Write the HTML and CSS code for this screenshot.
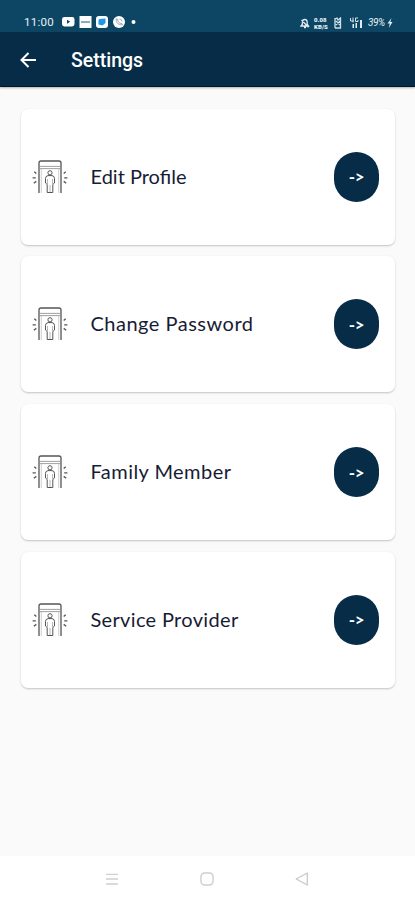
FILE: index.html
```
<!DOCTYPE html>
<html lang="en">
<head>
<meta charset="utf-8">
<meta name="viewport" content="width=device-width, initial-scale=1">
<title>Settings</title>
<link rel="stylesheet" href="styles.css">
</head>
<body>
<svg class="sprite" aria-hidden="true">
  <symbol id="gate" viewBox="0 0 36 36">
    <g fill="none" stroke="#555" stroke-width="1">
      <path d="M7 34V4Q7 2 9 2H27Q29 2 29 4V34" stroke-width="1.3"/>
      <path d="M7.5 7.4H28.5M7.5 9.6H28.5" stroke="#888" stroke-width=".8"/>
      <path d="M9.3 10V34M26.7 10V34" stroke="#bbb" stroke-width=".7"/>
      <circle cx="18" cy="13.8" r="2.1"/>
      <path d="M16 16.6H20Q22.5 17 22.5 19.5V24L20.8 25.5V33.5H15.2V25.5L13.5 24V19.5Q13.5 17 16 16.6Z"/>
      <path d="M18 26V33M15.5 20V25M20.5 20V25" stroke="#999" stroke-width=".7"/>
      <path d="M4.3 14.5L2.3 12.7M3.8 18.8H.6M4.3 22.4L1.8 24.2M31.7 14.5L33.7 12.7M32.2 18.8H35.4M31.7 22.4L34.2 24.2" stroke-width="1.3"/>
    </g>
  </symbol>
</svg>
<div class="status">
  <span class="time">11:00</span>
  <svg class="notes" width="78" height="14" viewBox="0 0 78 14">
    <rect x="0" y="2" width="12.5" height="9.5" rx="2.4" fill="#fff"/>
    <path d="M5 4.8L8.2 6.8L5 8.8Z" fill="#0d4664"/>
    <rect x="17.5" y="1" width="12" height="12" fill="#fff"/>
    <path d="M19 7H28" stroke="#42748b" stroke-width="1.2"/>
    <rect x="34" y="1" width="12" height="12" rx="3" fill="#fff"/>
    <path d="M37.5 4L43.5 3.5V8L40.5 10.5L36.5 9.5V5Z" fill="#1998f0"/>
    <circle cx="57" cy="7" r="6" fill="#fff"/>
    <path d="M54 3.8Q54 10 60.5 10L60 8.6L58 8.3L55.7 6L56 4.4ZM57.5 4Q60 4 60 6.5" fill="none" stroke="#8ba8b7" stroke-width=".9"/>
    <circle cx="71.5" cy="7" r="2" fill="#fff"/>
  </svg>
  <div class="system">
    <svg width="10" height="12" viewBox="0 0 10 12" fill="none" stroke="#e0ebf0" stroke-width="1.3"><path d="M1 9H8.5L7.2 7.2V5Q7 2.5 4.8 2.5T2.4 5V7.2ZM4 10.5H6M1.5 3L8.5 10.3"/></svg>
    <span class="rate"><b>0.08</b><b>KB/S</b></span>
    <svg width="8" height="12" viewBox="0 0 8 12" fill="none" stroke="#d2e0e7" stroke-width="1.3"><path d="M1 1V11M1 2L3 1L4 3L6.5 1V11H1M2 4L6 8M6 4L2 8"/></svg>
    <svg class="signal" width="13" height="12" viewBox="0 0 13 12"><path d="M.5 1V4H4M3 .5V5.5M8 1H5.5V4.5H8V3" fill="none" stroke="#d2e0e7" stroke-width="1"/><path d="M2.5 7H4V11H2.5ZM5.5 6H7V11H5.5ZM10 3H12V11H10Z" fill="#e0ebf0"/></svg>
    <span class="battery">39%</span>
    <svg width="6" height="12" viewBox="0 0 6 12"><path d="M4.5 1L.5 6.5H2.8L1.8 11L5.5 5H3.3Z" fill="#e0ebf0"/></svg>
  </div>
</div>
<header class="appbar">
  <svg width="17" height="18" viewBox="0 0 17 18" fill="none" stroke="#fff" stroke-width="2"><path d="M16 9H2M8.5 2L1.5 9L8.5 16"/></svg>
  <h1>Settings</h1>
</header>
<main class="list">
  <section class="card"><svg class="gate"><use href="#gate"/></svg><span class="label edit">Edit Profile</span><button class="go">-&gt;</button></section>
  <section class="card"><svg class="gate"><use href="#gate"/></svg><span class="label password">Change Password</span><button class="go">-&gt;</button></section>
  <section class="card"><svg class="gate"><use href="#gate"/></svg><span class="label family">Family Member</span><button class="go">-&gt;</button></section>
  <section class="card"><svg class="gate"><use href="#gate"/></svg><span class="label service">Service Provider</span><button class="go">-&gt;</button></section>
</main>
<nav class="navbar">
  <svg width="14" height="14" viewBox="0 0 14 14" fill="none" stroke="#d0d0d0" stroke-width="1.3"><path d="M1 2.3H13M1 7H13M1 12H13"/></svg>
  <svg width="14" height="14" viewBox="0 0 14 14" fill="none" stroke="#cecece" stroke-width="1.4"><rect x="1" y="1" width="12" height="12" rx="3.5"/></svg>
  <svg width="14" height="14" viewBox="0 0 14 14" fill="none" stroke="#c9c9c9" stroke-width="1.3" stroke-linejoin="round"><path d="M12.3 1V13L1.2 7Z"/></svg>
</nav>
</body>
</html>
```
FILE: styles.css
```
* { box-sizing: border-box; }
body {
  margin: 0;
  height: 900px;
  display: flex;
  flex-direction: column;
  background: #fafafa;
  font-family: Lato, sans-serif;
  overflow: hidden;
}
.sprite { display: none; }
.status {
  height: 32px;
  padding: 13px 22px 0 24px;
  background: #0d4664;
  color: #e8f1f5;
  display: flex;
  align-items: flex-start;
  font-family: Roboto, sans-serif;
}
.time { width: 38px; font-size: 11.5px; line-height: 19px; letter-spacing: .3px; }
.notes { margin-top: 2px; }
.system { margin-left: auto; display: flex; align-items: center; height: 19px; }
.rate {
  width: 16px;
  margin: 0 4px 0 4px;
  display: flex;
  flex-direction: column;
  font-size: 6px;
  line-height: 7px;
  letter-spacing: .1px;
}
.rate b { font-weight: 900; }
.signal { margin: 0 5px 0 8px; }
.battery { width: 19px; font-size: 10px; font-style: italic; letter-spacing: -.4px; }
.appbar {
  height: 55px;
  padding: 0 20px;
  display: flex;
  align-items: center;
  gap: 34px;
  background: #062c47;
  border-bottom: 1px solid #05152f;
  box-shadow: 0 1px 2px rgba(0, 0, 0, .3);
  color: #fff;
}
.appbar svg { margin-top: 1px; }
.appbar h1 {
  margin: 4px 0 0;
  font: 500 19.5px/24px Roboto, sans-serif;
}
.list {
  flex: 1;
  padding: 21.6px 20px 0 21px;
  display: flex;
  flex-direction: column;
  gap: 11.8px;
}
.card {
  height: 136px;
  padding: 0 16px 0 11px;
  display: flex;
  align-items: center;
  background: #fff;
  border-radius: 7px;
  box-shadow: 0 1px 2px rgba(0, 0, 0, .22);
}
.gate { width: 36px; height: 36px; flex: none; }
.label {
  margin: -2px 0 0 22.5px;
  color: #171c35;
  font-size: 20px;
  line-height: 26px;
  white-space: nowrap;
}
.password { letter-spacing: .5px; }
.family { letter-spacing: .45px; }
.service { letter-spacing: .33px; }
.go {
  width: 45px;
  height: 50px;
  margin-left: auto;
  padding: 1px 0 0;
  border: 0;
  border-radius: 22.5px;
  background: #062c47;
  color: #fff;
  font: 700 17px/20px Lato, sans-serif;
  letter-spacing: -.4px;
}
.navbar {
  height: 44px;
  padding: 2px 106px 0 105px;
  display: flex;
  align-items: center;
  justify-content: space-between;
  background: #fff;
}
```
